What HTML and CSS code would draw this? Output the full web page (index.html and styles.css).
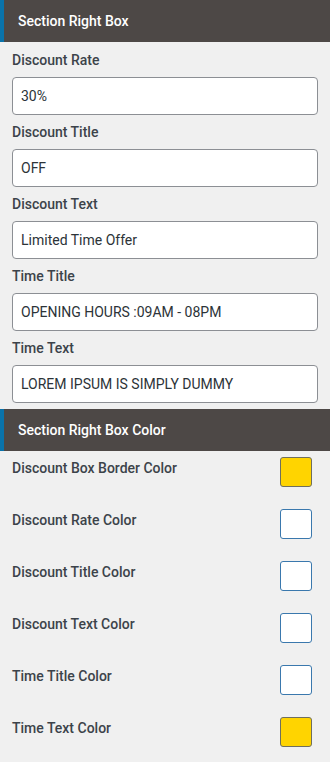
FILE: index.html
```html
<!DOCTYPE html>
<html lang="en">
<head>
  <meta charset="UTF-8" />
  <meta name="viewport" content="width=device-width, initial-scale=1.0"/>
  <title>Section Right Box</title>
  <link rel="stylesheet" href="styles.css">
</head>
<body>

  <div class="panel">
    <div class="section-head">Section Right Box</div>
    <div class="fields">
      <div class="field">
        <label>Discount Rate</label>
        <input type="text" class="text-input" value="30%" />
      </div>
      <div class="field">
        <label>Discount Title</label>
        <input type="text" class="text-input" value="OFF" />
      </div>
      <div class="field">
        <label>Discount Text</label>
        <input type="text" class="text-input" value="Limited Time Offer" />
      </div>
      <div class="field">
        <label>Time Title</label>
        <input type="text" class="text-input" value="OPENING HOURS :09AM - 08PM" />
      </div>
      <div class="field">
        <label>Time Text</label>
        <input type="text" class="text-input" value="LOREM IPSUM IS SIMPLY DUMMY" />
      </div>
    </div>

    <div class="section-head">Section Right Box Color</div>
    <div class="colors">
      <div class="color-row">
        <span class="color-label">Discount Box Border Color</span>
        <span class="swatch yellow"></span>
      </div>
      <div class="color-row">
        <span class="color-label">Discount Rate Color</span>
        <span class="swatch white"></span>
      </div>
      <div class="color-row">
        <span class="color-label">Discount Title Color</span>
        <span class="swatch white"></span>
      </div>
      <div class="color-row">
        <span class="color-label">Discount Text Color</span>
        <span class="swatch white"></span>
      </div>
      <div class="color-row">
        <span class="color-label">Time Title Color</span>
        <span class="swatch white"></span>
      </div>
      <div class="color-row">
        <span class="color-label">Time Text Color</span>
        <span class="swatch yellow"></span>
      </div>
    </div>
  </div>

</body>
</html>
```

FILE: styles.css
```css
body {
  margin: 0;
  font-family: Roboto, 'Liberation Sans', sans-serif;
  background-color: #f0f0f0;
}

.panel {
  width: 330px;
}

.section-head {
  height: 42px;
  line-height: 42px;
  background-color: #4d4846;
  border-left: 4px solid #0a73aa;
  padding-left: 14px;
  color: #fff;
  font-size: 14px;
  font-weight: 500;
}

.fields {
  padding: 8px 12px 0;
}

.field {
  display: flex;
  flex-direction: column;
  gap: 7px;
  margin-bottom: 7px;
}

.field:last-child {
  margin-bottom: 6px;
}

.field label {
  height: 20px;
  line-height: 20px;
  font-size: 14px;
  font-weight: 500;
  color: #3c434a;
}

.text-input {
  box-sizing: border-box;
  height: 38px;
  width: 100%;
  padding: 0 8px;
  border: 1px solid #8c8f94;
  border-radius: 4px;
  background-color: #fff;
  font-family: Roboto, 'Liberation Sans', sans-serif;
  font-size: 14px;
  color: #2c3338;
}

.colors {
  padding: 6px 18px 0 12px;
}

.color-row {
  display: flex;
  justify-content: space-between;
  align-items: flex-start;
  height: 30px;
  margin-bottom: 22px;
}

.color-label {
  padding-top: 1px;
  line-height: 20px;
  font-size: 14px;
  font-weight: 500;
  color: #3c434a;
}

.swatch {
  box-sizing: border-box;
  width: 32px;
  height: 30px;
  border-radius: 3px;
}

.swatch.yellow {
  background-color: #ffd400;
  border: 1px solid #6f6f5e;
}

.swatch.white {
  background-color: #fff;
  border: 1px solid #3a78ad;
}
```
